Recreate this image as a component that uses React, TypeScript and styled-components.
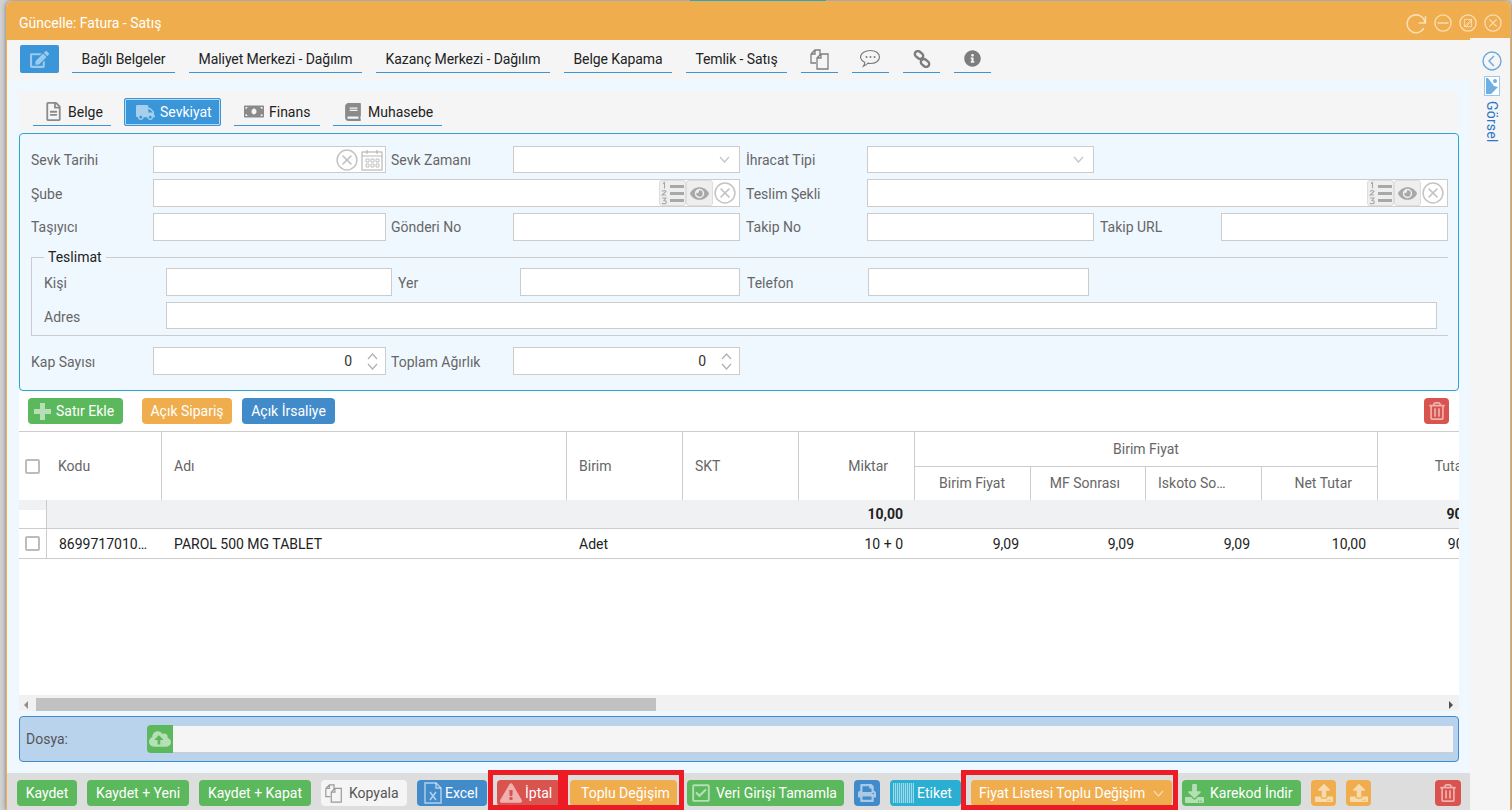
import React from "react";
import styled, { createGlobalStyle } from "styled-components";
import {
  FaEdit, FaTruck, FaMoneyBill, FaBook, FaRegFileAlt, FaRegTrashAlt, FaExclamationTriangle,
  FaPrint, FaRegCheckSquare, FaDownload, FaUpload, FaCloudUploadAlt, FaInfoCircle, FaEye,
} from "react-icons/fa";

const Global = createGlobalStyle`
  html, body { margin: 0; padding: 0; overflow: hidden; }
  body { font-family: Roboto, "Liberation Sans", sans-serif; font-size: 14px; color: #333; }
  * { box-sizing: border-box; }
`;

const Page = styled.div`
  position: relative; width: 1512px; height: 810px; padding: 1px 1px 0 6px; background: #d2d2d2; overflow: hidden;
`;
const TopSliver = styled.div`
  position: absolute; top: 0; left: 690px; width: 136px; height: 1px; background: #2aa6c9;
`;
const Win = styled.div`
  height: 809px; display: flex; flex-direction: column; background: #f5f5f5;
  border-left: 1px solid #f0ad4e; border-right: 1px solid #f0ad4e; border-radius: 6px 6px 0 0;
  box-shadow: 0 0 5px rgba(0,0,0,.45); overflow: hidden;
`;
const Header = styled.div`
  height: 39px; flex: none; background: #f0ad4e; color: #fff; display: flex; align-items: center;
  justify-content: space-between; padding: 5px 8px 0 12px; font-size: 14px;
`;
const Controls = styled.div`
  display: flex; align-items: center; gap: 7px; color: rgba(255,255,255,.6);
`;
const Body = styled.div`display: flex; flex: 1; min-height: 0;`;
const Main = styled.div`width: 1463px; flex: none; display: flex; flex-direction: column;`;
const Side = styled.aside`
  flex: 1; margin-top: -2px; position: relative; background: #f5f5f5; display: flex; flex-direction: column;
  align-items: center; padding: 13px 0 0 4px; color: #6aa8de;
`;
const SideImage = styled.span`display: flex; margin-top: 5px;`;
const SideLabel = styled.span`
  writing-mode: vertical-rl; color: #2f74c8; font-size: 14px; margin-top: 5px; letter-spacing: .2px;
`;
const Toolbar = styled.div`
  height: 40px; flex: none; display: flex; gap: 14px; padding: 5px 0 0 13px; background: #f5f5f5;
`;
const EditBtn = styled.button`
  width: 39px; height: 28px; border: 0; border-radius: 2px; background: #3a95d9; color: rgba(255,255,255,.5);
  display: flex; align-items: center; justify-content: center; padding: 0; margin-right: -1px; font-size: 19px;
`;
const ToolLink = styled.a<{ $w: number }>`
  width: ${p => p.$w}px; height: 28px; padding-top: 1px; display: flex; align-items: center; justify-content: center; color: #222;
  border-bottom: 1px solid #3a95d9; white-space: nowrap; letter-spacing: -.08px;
`;
const IconLink = styled(ToolLink)`
  color: #7d7d7d; padding-top: 0;
`;
const Content = styled.div`
  flex: 1; min-height: 0; display: flex; flex-direction: column; background: #f0f8ff; padding: 11px 11px 11px 12px;
`;
const TabBar = styled.div`
  height: 42px; flex: none; display: flex; gap: 13px; padding: 7px 0 0 14px; background: #f5f5f5;
`;
const Tab = styled.div<{ $active?: boolean; $w: number }>`
  width: ${p => p.$w}px; height: 28px; display: flex; align-items: center; padding-left: 10px;
  color: ${p => (p.$active ? "#fff" : "#222")}; background: ${p => (p.$active ? "#3a95d9" : "transparent")};
  font-size: 14px; border-bottom: 1px solid #3a95d9;
  ${p => p.$active && "border: 1px solid #3a95d9; border-radius: 2px; box-shadow: inset 0 0 0 1px #b8dcf5;"}
`;
const TabIcon = styled.span<{ $active?: boolean }>`
  width: 20px; margin-right: 5px; flex: none; display: flex; justify-content: center;
  color: ${p => (p.$active ? "rgba(255,255,255,.55)" : "#8a8a8a")};
`;
const FormPanel = styled.section`
  flex: none; height: 258px; border: 1px solid #2aa6cf; border-radius: 4px; background: #f0f8ff; padding: 12px 10px 0 11px;
`;
const FieldGrid = styled.div<{ $cols: string; $rows: string }>`
  display: grid; grid-template-columns: ${p => p.$cols}; grid-template-rows: ${p => p.$rows}; row-gap: 6px;
`;
const Label = styled.label<{ $pad?: number; $low?: boolean }>`
  display: flex; align-items: center; color: #666; font-size: 14px; padding-left: ${p => p.$pad ?? 0}px; white-space: nowrap;
  padding-top: ${p => (p.$low ? 2 : 0)}px;
`;
const Box = styled.div<{ $span?: number }>`
  display: flex; align-items: center; min-width: 0; background: #fff; border: 1px solid #ccc;
  ${p => p.$span && `grid-column: span ${p.$span};`}
`;
const TextInput = styled.input`
  flex: 1; min-width: 0; height: 100%; border: 0; outline: 0; background: transparent; font: inherit; color: #333;
  text-align: right; padding: 0 4px 0 8px;
`;
const AddonBtn = styled.span`
  width: 27px; align-self: stretch; flex: none; display: flex; align-items: center; justify-content: center;
  background: #eee; border: 1px solid #ddd; border-radius: 3px; color: #a8a8a8;
`;
const AddonIcon = styled.span<{ $w?: number; $m?: number }>`
  flex: none; width: ${p => p.$w ?? 24}px; display: flex; align-items: center; justify-content: center; color: #c4c4c4;
  margin-right: ${p => p.$m ?? 0}px;
`;
const Stepper = styled.span`
  flex: none; width: 26px; display: flex; flex-direction: column; align-items: center; gap: 3px; margin-left: 3px; color: #b0b0b0;
`;
const Fieldset = styled.fieldset`
  margin: 8px 0 11px; padding: 3px 0 6px 12px; border: 1px solid #ccc; border-right: 0; min-width: 0;
`;
const Legend = styled.legend`
  margin-left: 0; padding: 0 4px; line-height: 16px; color: #222; font-size: 14px;
`;
const Grid = styled.div`
  flex: 1; min-height: 0; display: flex; flex-direction: column; background: #fff; overflow: hidden;
`;
const GridTools = styled.div`
  flex: none; height: 40px; display: flex; align-items: flex-start; padding: 7px 10px 0 9px; gap: 10px;
`;
const Btn = styled.button<{ $c: string; $fg?: string; $w?: number; $pl?: number; $gap?: number }>`
  position: relative; height: 26px; border: 0; border-radius: 4px; background: ${p => p.$c}; color: ${p => p.$fg ?? "#fff"};
  font: 14px Roboto, sans-serif; display: inline-flex; align-items: center;
  justify-content: ${p => (p.$pl === undefined ? "center" : "flex-start")}; gap: ${p => p.$gap ?? 6}px;
  padding: 0 0 0 ${p => p.$pl ?? 0}px; flex: none; width: ${p => p.$w}px; white-space: nowrap;
  svg { color: rgba(255,255,255,.55); flex: none; }
`;
const SpacedBtn = styled(Btn)`margin-left: 9px;`;
const Marked = styled(Btn)<{ $l: number; $r: number }>`
  &::after {
    content: ""; position: absolute; top: -10px; bottom: -4px; left: -${p => p.$l}px; right: -${p => p.$r}px;
    border: 5px solid #ed1c24; pointer-events: none;
  }
`;
const PushRight = styled.span`margin-left: auto;`;
const TableClip = styled.div`flex: 1; min-height: 0; overflow: hidden; border-top: 1px solid #ccc;`;
const Table = styled.table`
  width: 1475px; table-layout: fixed; border-collapse: separate; border-spacing: 0; font-size: 14px;
`;
const Th = styled.th<{ $align?: string; $h?: number; $bare?: boolean; $pr?: number }>`
  height: ${p => p.$h ?? 33}px; font-weight: 400; color: #666; text-align: ${p => p.$align ?? "left"};
  padding: 0 ${p => p.$pr ?? 12}px 0 12px; border-right: ${p => (p.$bare ? "0" : "1px solid #ccc")};
  white-space: nowrap; overflow: hidden; text-overflow: ellipsis;
`;
const GroupTh = styled(Th)`border-bottom: 1px solid #ccc;`;
const SubTh = styled(Th)`padding-bottom: 2px;`;
const CodeTh = styled(Th)`padding-left: 11px;`;
const Td = styled.td<{ $align?: string; $bold?: boolean; $sum?: boolean }>`
  height: ${p => (p.$sum ? 29 : 30)}px; padding: 0 12px; text-align: ${p => p.$align ?? "left"}; color: #222;
  font-weight: ${p => (p.$bold ? 700 : 400)}; border-bottom: 1px solid #ccc; white-space: nowrap; overflow: hidden; text-overflow: ellipsis;
  background: ${p => (p.$sum ? "#f0f1f3" : "#fff")};
`;
const SumCheckCell = styled.td`
  height: 29px; border-bottom: 1px solid #ccc; border-right: 1px solid #ccc;
  background: linear-gradient(#f0f1f3 10px, #fff 10px);
`;
const CheckCell = styled.td`
  height: 30px; padding: 0 0 0 6px; border-bottom: 1px solid #ccc; border-right: 1px solid #ccc;
`;
const Check = styled.span`
  display: block; width: 15px; height: 15px; border: 2px solid #bcbcbc; border-radius: 2px; background: #fff;
`;
const HeadCheck = styled(Th)`padding: 0 0 0 6px;`;
const ScrollBar = styled.div`
  flex: none; height: 16px; background: #f1f1f1; display: flex; align-items: center; padding: 2px 6px 0 5px; border-top: 1px solid #f1f1f1;
`;
const Arrow = styled.span<{ $dir: "l" | "r" }>`
  width: 0; height: 0; border-top: 4px solid transparent; border-bottom: 4px solid transparent;
  ${p => (p.$dir === "l" ? "border-right: 4px solid #8f8f8f;" : "border-left: 4px solid #505050;")}
`;
const Thumb = styled.span`
  width: 620px; height: 13px; margin-left: 8px; margin-right: auto; background: #c1c1c1;
`;
const FilePanel = styled.div`
  flex: none; height: 46px; margin-top: 5px; background: #b9d3ed; border: 1px solid #428bca; border-radius: 4px;
  display: flex; align-items: center; padding: 0 5px 0 6px;
`;
const FileLabel = styled.span`width: 121px; color: #555; font-size: 14px;`;
const FileBtn = styled.span`
  width: 26px; height: 28px; flex: none; background: #5cb85c; border-radius: 4px 0 0 4px; color: rgba(255,255,255,.55);
  display: flex; align-items: center; justify-content: center; font-size: 22px;
`;
const FileBar = styled.div`
  flex: 1; height: 27px; background: #f5f5f5; border-bottom: 1px solid #ccc;
`;
const Footer = styled.footer`
  height: 37px; flex: none; background: #ddd; display: flex; align-items: flex-start; gap: 10px; padding: 7px 9px 0 10px;
`;

const Circle = ({ size = 18, children }: { size?: number; children?: React.ReactNode }) => (
  <svg width={size} height={size} viewBox="0 0 20 20" fill="none" stroke="currentColor" strokeWidth="1.4">
    <circle cx="10" cy="10" r="9" />
    {children}
  </svg>
);
const XCircle = ({ size = 22 }: { size?: number }) => (
  <Circle size={size}><path d="M6 6l8 8M14 6l-8 8" /></Circle>
);
const Refresh = () => (
  <svg width="21" height="21" viewBox="0 0 20 20" fill="none" stroke="currentColor" strokeWidth="1.5">
    <path d="M18 9a8.5 8.5 0 1 0-1 5.5" /><path d="M18.5 3v6.5H12" />
  </svg>
);
const Chevron = ({ up }: { up?: boolean }) => (
  <svg width="11" height="7" viewBox="0 0 11 7" fill="none" stroke="currentColor" strokeWidth="1.2">
    <path d={up ? "M1 6l4.5-5L10 6" : "M1 1l4.5 5L10 1"} />
  </svg>
);
const Calendar = () => (
  <svg width="22" height="22" viewBox="0 0 22 22" fill="none" stroke="#b8b8b8" strokeWidth="1.2">
    <rect x="1" y="3" width="20" height="18" />
    <path d="M1 7h20M6 1v4M16 1v4" />
    <path d="M5 10h3v3H5zM10 10h3v3h-3zM15 10h3v3h-3zM5 15h3v3H5zM10 15h3v3h-3zM15 15h3v3h-3z" strokeWidth=".9" />
  </svg>
);
const ListOl = () => (
  <svg width="24" height="24" viewBox="0 0 24 24">
    <path d="M9 4h14v3H9zM9 11h14v3H9zM9 18h14v3H9z" fill="#a8a8a8" />
    <path d="M2 2.500l1.500-1v6M1 10.500q2.500-2 4 0l-4 3.500h4M1 17h4l-2 2.500q3 0 2 2.500q-2 1.500-4 0" fill="none" stroke="#a8a8a8" strokeWidth="1.1" />
  </svg>
);
const CopyDocs = ({ size = 22, color = "#7d7d7d" }: { size?: number; color?: string }) => (
  <svg width={size} height={size} viewBox="0 0 22 22" fill="none" stroke={color} strokeWidth="1.3">
    <path d="M2 6l4-4h5v5M2 6v9h5M2 6h4V2" />
    <path d="M8 10l4-4h7v15H8zM8 10h4V6" />
  </svg>
);
const ChatBubble = () => (
  <svg width="21" height="19" viewBox="0 0 21 19" fill="none" stroke="#7d7d7d" strokeWidth="1.2">
    <path d="M10.500 1.500c5 0 9 2.800 9 6.500s-4 6.500-9 6.500q-1.300 0-2.500-.3q-2 2-4.500 3q1.200-1.800 1.200-4c-2.400-1.200-4.200-3-4.200-5.200c0-3.700 5-6.500 10-6.500z" />
    <circle cx="6.500" cy="8" r="1" fill="#7d7d7d" stroke="none" />
    <circle cx="10.500" cy="8" r="1" fill="#7d7d7d" stroke="none" />
    <circle cx="14.500" cy="8" r="1" fill="#7d7d7d" stroke="none" />
  </svg>
);
const ChainIcon = () => (
  <svg width="18" height="18" viewBox="0 0 18 18" fill="none" stroke="#7d7d7d" strokeWidth="2.400">
    <rect x="1.500" y="2" width="9" height="6" rx="3" transform="rotate(40 6 5)" />
    <rect x="7.500" y="10" width="9" height="6" rx="3" transform="rotate(40 12 13)" />
  </svg>
);
const ImageIcon = () => (
  <svg width="16" height="20" viewBox="0 0 16 20">
    <rect x=".5" y=".5" width="15" height="19" fill="#fff" stroke="#9cc7ea" />
    <path d="M2 2h2l6 8 4 1-7 7H2z" fill="#6fb0e4" />
    <circle cx="11" cy="5" r="2" fill="#6fb0e4" />
  </svg>
);
const ExcelIcon = () => (
  <svg width="18" height="22" viewBox="0 0 18 22" fill="none" stroke="rgba(255,255,255,.6)" strokeWidth="1.4">
    <path d="M1 1h11l5 5v15H1z" /><path d="M12 1v5h5" />
    <path d="M6 10l6 8M12 10l-6 8" strokeWidth="1.6" />
  </svg>
);
const BarcodeIcon = () => (
  <svg width="21" height="20" viewBox="0 0 21 20" fill="rgba(255,255,255,.55)">
    {[0, 2, 4, 6, 8, 10, 12, 14, 16, 18, 20].map(x => <rect key={x} x={x} y="0" width="1.2" height="20" />)}
  </svg>
);
const ThickPlus = () => (
  <svg width="17" height="17" viewBox="0 0 17 17" fill="rgba(255,255,255,.55)">
    <path d="M6 0h5v6h6v5h-6v6H6v-6H0V6h6z" />
  </svg>
);

const Cols = "122px 233px 127px 227px 127px 227px 127px 227px";
const InnerCols = "122px 226px 128px 220px 128px 221px 348px";

const ComboEnd = () => (
  <>
    <AddonBtn><ListOl /></AddonBtn>
    <AddonBtn><FaEye size={19} /></AddonBtn>
    <AddonIcon $w={24}><XCircle /></AddonIcon>
    <AddonIcon $w={2} />
  </>
);
const SelectEnd = () => <AddonIcon $w={24} $m={3}><Chevron /></AddonIcon>;
const NumberField = () => (
  <Box>
    <TextInput readOnly value="0" />
    <Stepper><Chevron up /><Chevron /></Stepper>
  </Box>
);

export default function App() {
  return (
    <Page>
      <Global />
      <TopSliver />
      <Win>
        <Header>
          <span>Güncelle: Fatura - Satış</span>
          <Controls>
            <Refresh />
            <Circle><path d="M4 10h12" /></Circle>
            <Circle><path d="M6 6h8v8H6zM6 14l8-8M8 14l6-6" strokeWidth="1" /></Circle>
            <XCircle size={18} />
          </Controls>
        </Header>
        <Body>
          <Main>
            <Toolbar>
              <EditBtn><FaEdit /></EditBtn>
              <ToolLink $w={103}>Bağlı Belgeler</ToolLink>
              <ToolLink $w={173}>Maliyet Merkezi - Dağılım</ToolLink>
              <ToolLink $w={174}>Kazanç Merkezi - Dağılım</ToolLink>
              <ToolLink $w={108}>Belge Kapama</ToolLink>
              <ToolLink $w={101}>Temlik - Satış</ToolLink>
              <IconLink $w={37}><CopyDocs /></IconLink>
              <IconLink $w={37}><ChatBubble /></IconLink>
              <IconLink $w={37}><ChainIcon /></IconLink>
              <IconLink $w={37}><FaInfoCircle size={17} /></IconLink>
            </Toolbar>
            <Content>
              <TabBar>
                <Tab $w={78}><TabIcon><FaRegFileAlt size={19} /></TabIcon>Belge</Tab>
                <Tab $w={97} $active><TabIcon $active><FaTruck size={19} /></TabIcon>Sevkiyat</Tab>
                <Tab $w={86}><TabIcon><FaMoneyBill size={21} /></TabIcon>Finans</Tab>
                <Tab $w={109}><TabIcon><FaBook size={18} /></TabIcon>Muhasebe</Tab>
              </TabBar>
              <FormPanel>
                <FieldGrid $cols={Cols} $rows="27px 28px 28px">
                  <Label>Sevk Tarihi</Label>
                  <Box><TextInput /><AddonIcon $w={24}><XCircle /></AddonIcon><AddonIcon $w={26}><Calendar /></AddonIcon></Box>
                  <Label $pad={5}>Sevk Zamanı</Label>
                  <Box><TextInput /><SelectEnd /></Box>
                  <Label $pad={6}>İhracat Tipi</Label>
                  <Box><TextInput /><SelectEnd /></Box>
                  <span /><span />
                  <Label $low>Şube</Label>
                  <Box $span={3}><TextInput /><ComboEnd /></Box>
                  <Label $pad={6} $low>Teslim Şekli</Label>
                  <Box $span={3}><TextInput /><ComboEnd /></Box>
                  <Label>Taşıyıcı</Label>
                  <Box><TextInput /></Box>
                  <Label $pad={5}>Gönderi No</Label>
                  <Box><TextInput /></Box>
                  <Label $pad={6}>Takip No</Label>
                  <Box><TextInput /></Box>
                  <Label $pad={6}>Takip URL</Label>
                  <Box><TextInput /></Box>
                </FieldGrid>
                <Fieldset>
                  <Legend>Teslimat</Legend>
                  <FieldGrid $cols={InnerCols} $rows="28px 27px">
                    <Label $low>Kişi</Label>
                    <Box><TextInput /></Box>
                    <Label $pad={6} $low>Yer</Label>
                    <Box><TextInput /></Box>
                    <Label $pad={7} $low>Telefon</Label>
                    <Box><TextInput /></Box>
                    <span />
                    <Label $low>Adres</Label>
                    <Box $span={6}><TextInput /></Box>
                  </FieldGrid>
                </Fieldset>
                <FieldGrid $cols={Cols} $rows="28px">
                  <Label $low>Kap Sayısı</Label>
                  <NumberField />
                  <Label $pad={5} $low>Toplam Ağırlık</Label>
                  <NumberField />
                </FieldGrid>
              </FormPanel>
              <Grid>
                <GridTools>
                  <Btn $c="#5cb85c" $w={95} $pl={6} $gap={5}><ThickPlus />Satır Ekle</Btn>
                  <SpacedBtn $c="#f0ad4e" $w={90}>Açık Sipariş</SpacedBtn>
                  <Btn $c="#428bca" $w={93}>Açık İrsaliye</Btn>
                  <PushRight />
                  <Btn $c="#d9534f" $w={25}><FaRegTrashAlt size={18} /></Btn>
                </GridTools>
                <TableClip>
                  <Table>
                    <colgroup>
                      {[28, 115, 405, 116, 116, 116, 116, 115, 116, 116, 116].map((w, i) => <col key={i} width={w} />)}
                    </colgroup>
                    <thead>
                      <tr>
                        <HeadCheck rowSpan={2} $bare $h={68}><Check /></HeadCheck>
                        <CodeTh rowSpan={2}>Kodu</CodeTh>
                        <Th rowSpan={2}>Adı</Th>
                        <Th rowSpan={2}>Birim</Th>
                        <Th rowSpan={2}>SKT</Th>
                        <Th rowSpan={2} $align="right" $pr={26}>Miktar</Th>
                        <GroupTh colSpan={4} $h={35} $align="center">Birim Fiyat</GroupTh>
                        <Th rowSpan={2} $align="right" $pr={26}>Tutar</Th>
                      </tr>
                      <tr>
                        <SubTh $align="right" $pr={25}>Birim Fiyat</SubTh>
                        <SubTh $align="right" $pr={25}>MF Sonrası</SubTh>
                        <SubTh $pr={31}>Iskoto Sonrası</SubTh>
                        <SubTh $align="right" $pr={25}>Net Tutar</SubTh>
                      </tr>
                    </thead>
                    <tbody>
                      <tr>
                        <SumCheckCell />
                        {[0, 1, 2, 3].map(i => <Td key={i} $sum />)}
                        <Td $sum $bold $align="right">10,00</Td>
                        {[0, 1, 2, 3].map(i => <Td key={i} $sum />)}
                        <Td $sum $bold $align="right">90,90</Td>
                      </tr>
                      <tr>
                        <CheckCell><Check /></CheckCell>
                        <Td>8699717010016</Td>
                        <Td>PAROL 500 MG TABLET</Td>
                        <Td>Adet</Td>
                        <Td />
                        <Td $align="right">10 + 0</Td>
                        <Td $align="right">9,09</Td>
                        <Td $align="right">9,09</Td>
                        <Td $align="right">9,09</Td>
                        <Td $align="right">10,00</Td>
                        <Td $align="right">90,90</Td>
                      </tr>
                    </tbody>
                  </Table>
                </TableClip>
                <ScrollBar>
                  <Arrow $dir="l" />
                  <Thumb />
                  <Arrow $dir="r" />
                </ScrollBar>
              </Grid>
              <FilePanel>
                <FileLabel>Dosya:</FileLabel>
                <FileBtn><FaCloudUploadAlt /></FileBtn>
                <FileBar />
              </FilePanel>
            </Content>
            <Footer>
              <Btn $c="#5cb85c" $w={60}>Kaydet</Btn>
              <Btn $c="#5cb85c" $w={102}>Kaydet + Yeni</Btn>
              <Btn $c="#5cb85c" $w={112}>Kaydet + Kapat</Btn>
              <Btn $c="#f5f5f5" $fg="#555" $w={86} $pl={3} $gap={5}><CopyDocs size={20} color="#999" />Kopyala</Btn>
              <Btn $c="#428bca" $w={70} $pl={7} $gap={3}><ExcelIcon />Excel</Btn>
              <Marked $c="#d9534f" $w={63} $l={9} $r={3} $pl={3} $gap={3}><FaExclamationTriangle size={22} />İptal</Marked>
              <Marked $c="#f0ad4e" $w={107} $l={7} $r={7} $pl={11}>Toplu Değişim</Marked>
              <Btn $c="#5cb85c" $w={157} $pl={4} $gap={5}><FaRegCheckSquare size={20} />Veri Girişi Tamamla</Btn>
              <Btn $c="#428bca" $w={26}><FaPrint size={18} /></Btn>
              <Btn $c="#2aaed2" $w={71} $pl={3} $gap={3}><BarcodeIcon />Etiket</Btn>
              <Marked $c="#f0ad4e" $w={201} $l={10} $r={6} $pl={8} $gap={8}>Fiyat Listesi Toplu Değişim<Chevron /></Marked>
              <Btn $c="#5cb85c" $w={119} $pl={3} $gap={6}><FaDownload size={19} />Karekod İndir</Btn>
              <Btn $c="#f0ad4e" $w={25}><FaUpload size={18} /></Btn>
              <Btn $c="#f0ad4e" $w={25}><FaUpload size={18} /></Btn>
              <PushRight />
              <Btn $c="#d9534f" $w={26}><FaRegTrashAlt size={18} /></Btn>
            </Footer>
          </Main>
          <Side>
            <Circle size={20}><path d="M12 5l-5 5 5 5" /></Circle>
            <SideImage><ImageIcon /></SideImage>
            <SideLabel>Görsel</SideLabel>
          </Side>
        </Body>
      </Win>
    </Page>
  );
}
